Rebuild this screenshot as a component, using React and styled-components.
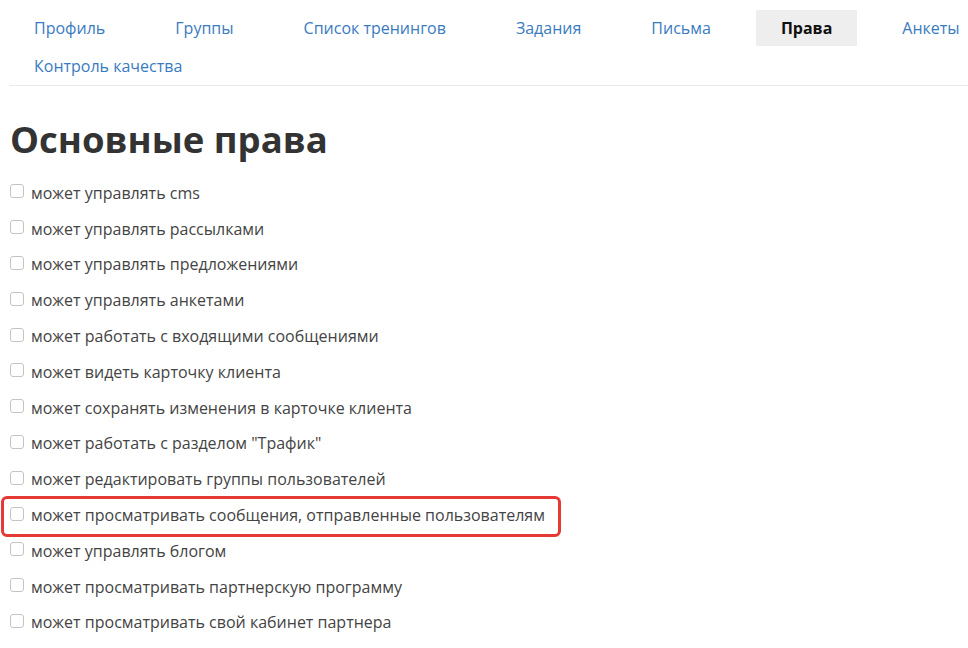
import React from "react";
import styled, { createGlobalStyle } from "styled-components";

const GlobalStyle = createGlobalStyle`
  html, body {
    margin: 0;
    padding: 0;
    background: #fff;
  }
  body {
    font-family: "Open Sans", "Liberation Sans", sans-serif;
    color: #333;
  }
`;

const tabs = [
  "Профиль",
  "Группы",
  "Список тренингов",
  "Задания",
  "Письма",
  "Права",
  "Анкеты",
  "Контроль качества",
];

const rights = [
  "может управлять cms",
  "может управлять рассылками",
  "может управлять предложениями",
  "может управлять анкетами",
  "может работать с входящими сообщениями",
  "может видеть карточку клиента",
  "может сохранять изменения в карточке клиента",
  'может работать с разделом "Трафик"',
  "может редактировать группы пользователей",
  "может просматривать сообщения, отправленные пользователям",
  "может управлять блогом",
  "может просматривать партнерскую программу",
  "может просматривать свой кабинет партнера",
];

export default function App() {
  return (
    <Page>
      <GlobalStyle />
      <Tabs>
        {tabs.map((t) => (
          <Tab key={t} active={t === "Права"}>
            {t}
          </Tab>
        ))}
      </Tabs>
      <Title>Основные права</Title>
      <List>
        {rights.map((r, i) => (
          <Item key={r} highlighted={i === 9}>
            <Box type="checkbox" />
            <span>{r}</span>
          </Item>
        ))}
      </List>
    </Page>
  );
}

const Page = styled.div`
  padding: 10px 0 0 10px;
  width: 958px;
  height: 638px;
  overflow: hidden;
`;

const Tabs = styled.nav`
  display: flex;
  flex-wrap: wrap;
  row-gap: 2px;
  width: 1010px;
  padding-bottom: 1px;
  margin-left: -1px;
  border-bottom: 1px solid #eaeaea;
`;

const Tab = styled.a`
  display: block;
  height: 36px;
  line-height: 36px;
  padding: 0 25px;
  margin-right: 20px;
  font-size: 16px;
  white-space: nowrap;
  color: ${(p) => (p.active ? "#111" : "#3a7bbf")};
  font-weight: ${(p) => (p.active ? 700 : 400)};
  background: ${(p) => (p.active ? "#eeeeee" : "transparent")};
  cursor: pointer;
`;

const Title = styled.h1`
  margin: 31px 0 14px;
  font-size: 36.5px;
  line-height: 44px;
  font-weight: 700;
  color: #333;
`;

const List = styled.div`
  display: flex;
  flex-direction: column;
`;

const Item = styled.label`
  position: relative;
  display: flex;
  align-items: center;
  gap: 7px;
  height: 35.8px;
  font-size: 16px;
  color: #444;

  &::after {
    content: "";
    display: ${(p) => (p.highlighted ? "block" : "none")};
    position: absolute;
    left: -9px;
    top: -1px;
    width: 560px;
    height: 41px;
    border: 3px solid #e53935;
    border-radius: 6px;
    box-sizing: border-box;
  }
`;

const Box = styled.input`
  appearance: none;
  width: 14px;
  height: 14px;
  margin: -3px 0 0 0;
  border: 1px solid #c4c4c4;
  border-radius: 3px;
  background: #fff;
`;
